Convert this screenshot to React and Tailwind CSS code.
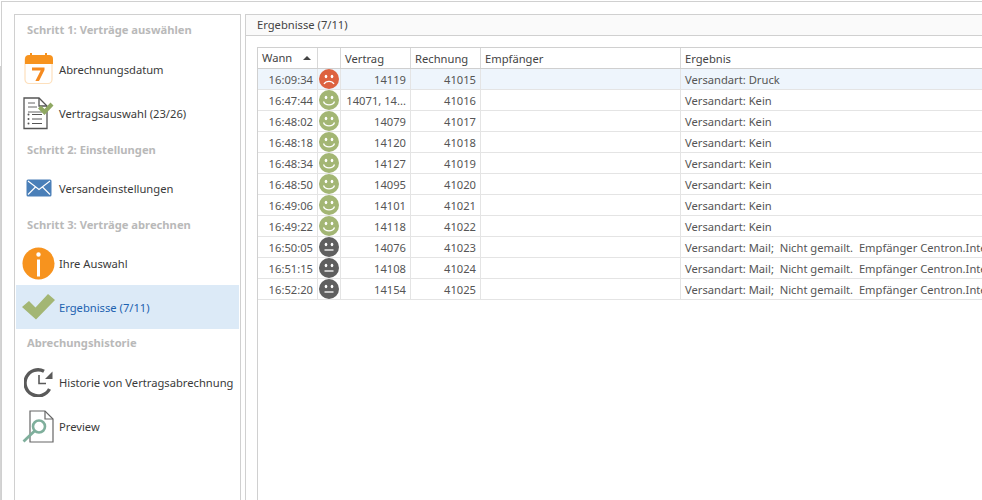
const font = { fontFamily: '"Noto Sans", sans-serif' };

const mailText = 'Versandart: Mail;  Nicht gemailt.  Empfänger Centron.Inte';

const rows = [
  ['16:09:34', 'sad', '14119', '41015', 'Versandart: Druck'],
  ['16:47:44', 'happy', '14071, 14...', '41016', 'Versandart: Kein'],
  ['16:48:02', 'happy', '14079', '41017', 'Versandart: Kein'],
  ['16:48:18', 'happy', '14120', '41018', 'Versandart: Kein'],
  ['16:48:34', 'happy', '14127', '41019', 'Versandart: Kein'],
  ['16:48:50', 'happy', '14095', '41020', 'Versandart: Kein'],
  ['16:49:06', 'happy', '14101', '41021', 'Versandart: Kein'],
  ['16:49:22', 'happy', '14118', '41022', 'Versandart: Kein'],
  ['16:50:05', 'neutral', '14076', '41023', mailText],
  ['16:51:15', 'neutral', '14108', '41024', mailText],
  ['16:52:20', 'neutral', '14154', '41025', mailText],
];

const Calendar = () => (
  <svg width="30" height="32" viewBox="0 0 30 32">
    <rect x="1" y="3" width="27" height="27.5" rx="4" fill="#fff" stroke="#fde0bd" strokeWidth="1.2" />
    <path d="M1 11V6a4 4 0 0 1 4-4h20a4 4 0 0 1 4 4v5z" fill="#f7931e" />
    <rect x="6" y="0" width="2" height="3" fill="#f7931e" />
    <rect x="21" y="0" width="2" height="3" fill="#f7931e" />
    <path d="M8 14.5h12.5v2.6L15 28h-3.6l5.3-10.5H8z" fill="#f58a1f" />
  </svg>
);

const ListCheck = () => (
  <svg width="32" height="33" viewBox="0 0 32 33">
    <path d="M1 1h15l8 8v22.5H1z" fill="#fff" stroke="#555" strokeWidth="1.3" />
    <path d="M16 1v8h8" fill="none" stroke="#555" strokeWidth="1.3" />
    <path d="M5 6h7M5 10h9M5 15h14" stroke="#666" strokeWidth="1" />
    <path d="M9 17.5h10M9 22h10M9 26.5h10" stroke="#555" strokeWidth="1" />
    <circle cx="5.5" cy="17.5" r="1" fill="#555" />
    <circle cx="5.5" cy="22" r="1" fill="#555" />
    <circle cx="5.5" cy="26.5" r="1" fill="#555" />
    <path d="M15 11.5l3-3 3.5 3.5 6-6.5 3 3-9 9.5z" fill="#8fa862" />
  </svg>
);

const Mail = () => (
  <svg width="26" height="18" viewBox="0 0 26 18">
    <rect width="25" height="17" x="0.5" y="0.5" rx="1.5" fill="#4a7fb8" />
    <path d="M2 2l11 8.5L24 2M2 15.5l7.5-7.5M24 15.5L16.500 8" fill="none" stroke="#fff" strokeWidth="1.1" />
  </svg>
);

const Info = () => (
  <svg width="33" height="33" viewBox="0 0 33 33">
    <circle cx="16.500" cy="16.500" r="16" fill="#f7931e" />
    <rect x="15" y="12.500" width="3" height="17" fill="#fff" />
    <circle cx="16.500" cy="7.500" r="2.200" fill="#fff" />
  </svg>
);

const Check = () => (
  <svg width="33" height="26" viewBox="0 0 33 26">
    <path d="M0 13l7-6 6.500 6.500L26 0l7 6-19 19.500z" fill="#a3b674" />
  </svg>
);

const History = () => (
  <svg width="30" height="30" viewBox="0 0 30 30">
    <path d="M25.500 22A13 13 0 1 1 20 4.300" fill="none" stroke="#5a5a5a" strokeWidth="3.400" />
    <path d="M15 8v8.500h7" fill="none" stroke="#5a5a5a" strokeWidth="1.600" />
    <path d="M21 12l7.500-7.500V12z" fill="#5a5a5a" />
  </svg>
);

const Preview = () => (
  <svg width="33" height="33" viewBox="0 0 33 33">
    <path d="M8 1h15l8 8v23H8z" fill="#fff" stroke="#666" strokeWidth="1.200" />
    <path d="M23 1v8h8" fill="none" stroke="#666" strokeWidth="1.200" />
    <circle cx="17" cy="16.500" r="6" fill="#fff" stroke="#7faf9c" strokeWidth="2.600" />
    <path d="M12.500 21L1.500 31.500" stroke="#7faf9c" strokeWidth="2.800" />
  </svg>
);

const Face = ({ mood }) => {
  const fill = mood === 'sad' ? 'fill-[#dd6240]' : mood === 'happy' ? 'fill-[#a3b674]' : 'fill-[#5f5f5f]';
  return (
    <svg width="20" height="20" viewBox="0 0 20 20">
      <circle cx="10" cy="10" r="10" className={fill} />
      <ellipse cx="7" cy="7.500" rx="1.300" ry="1.700" fill="#fff" />
      <ellipse cx="13" cy="7.500" rx="1.300" ry="1.700" fill="#fff" />
      {mood === 'sad' && <path d="M5 15c2-3.500 8-3.500 10 0" fill="none" stroke="#fff" strokeWidth="1.300" />}
      {mood === 'happy' && <path d="M4.500 11.500c1.500 4.500 9.500 4.500 11 0" fill="none" stroke="#fff" strokeWidth="1.300" />}
      {mood === 'neutral' && <path d="M5.500 13h9" stroke="#fff" strokeWidth="1.300" />}
    </svg>
  );
};

const Group = ({ className, children }) => (
  <div className={`pl-[12px] text-[11.2px] font-bold text-[#b9b9b9] leading-[16px] ${className}`}>{children}</div>
);

const Item = ({ icon, label, active }) => (
  <div className={`flex items-center h-[44px] mx-px ${active ? 'bg-[#dceaf7] text-[#1c62b0]' : 'text-[#3a3a3a]'}`}>
    <div className="w-[43px] flex justify-center shrink-0 pl-[2px]">{icon}</div>
    <span className="text-[11.2px] leading-[16px] pt-px whitespace-nowrap">{label}</span>
  </div>
);

const App = () => {
  return (
    <div className="flex h-[500px] w-[982px] overflow-hidden bg-white" style={font}>
      <div className="w-px shrink-0 mt-[66px] bg-[#d4d4d4]" />
      <div className="flex-1 mt-px border-t border-l border-[#d0d0d0] flex pt-[12px] pl-[12px] gap-[4px] min-w-0">
        <div className="w-[227px] shrink-0 border border-b-0 border-[#d0d0d0]">
          <Group className="mt-[7px] mb-[9px]">Schritt 1: Verträge auswählen</Group>
          <Item icon={<Calendar />} label="Abrechnungsdatum" />
          <Item icon={<ListCheck />} label="Vertragsauswahl (23/26)" />
          <Group className="mt-[7px] mb-[8px]">Schritt 2: Einstellungen</Group>
          <Item icon={<Mail />} label="Versandeinstellungen" />
          <Group className="mt-[7px] mb-[8px]">Schritt 3: Verträge abrechnen</Group>
          <Item icon={<Info />} label="Ihre Auswahl" />
          <Item icon={<Check />} label="Ergebnisse (7/11)" active />
          <Group className="mt-[6px] mb-[9px]">Abrechungshistorie</Group>
          <Item icon={<History />} label="Historie von Vertragsabrechnung" />
          <Item icon={<Preview />} label="Preview" />
        </div>

        <div className="flex-1 min-w-0 border-t border-l border-[#d0d0d0] overflow-hidden">
          <div className="h-[21px] bg-[#fafafa] border-b border-[#d0d0d0] pl-[11px] text-[11.2px] leading-[20px] text-[#444]">Ergebnisse (7/11)</div>
          <div className="mt-[11px] ml-[11px] w-[900px] h-[500px] border-l border-t border-[#d0d0d0] text-[11.2px] text-[#555]">
            <div className="flex h-[21px] border-b border-[#cfcfcf] leading-[22px] text-[#444]">
              <div className="w-[60px] pl-[4px] border-r border-[#d8d8d8] flex items-center justify-between pr-[3px]">
                <span>Wann</span>
                <svg width="8" height="4" viewBox="0 0 8 4" className="mr-[3px]"><path d="M0 4L4 0l4 4z" fill="#444" /></svg>
              </div>
              <div className="w-[23px] border-r border-[#d8d8d8]" />
              <div className="w-[70px] pl-[4px] border-r border-[#d8d8d8]">Vertrag</div>
              <div className="w-[70px] pl-[4px] border-r border-[#d8d8d8]">Rechnung</div>
              <div className="w-[200px] pl-[4px] border-r border-[#d8d8d8]">Empfänger</div>
              <div className="flex-1 pl-[4px]">Ergebnis</div>
            </div>
            {rows.map((r, i) => (
              <div key={r[0]} className={`flex h-[21px] border-b border-[#e4e4e4] leading-[22px] ${i === 0 ? 'bg-[#eef5fc]' : ''}`}>
                <div className="w-[60px] pr-[4px] text-right border-r border-[#e4e4e4]">{r[0]}</div>
                <div className="w-[23px] border-r border-[#e4e4e4] flex items-center justify-center"><Face mood={r[1]} /></div>
                <div className="w-[70px] pr-[4px] text-right border-r border-[#e4e4e4] whitespace-nowrap">{r[2]}</div>
                <div className="w-[70px] pr-[4px] text-right border-r border-[#e4e4e4]">{r[3]}</div>
                <div className="w-[200px] border-r border-[#e4e4e4]" />
                <div className="flex-1 pl-[4px] whitespace-pre">{r[4]}</div>
              </div>
            ))}
          </div>
        </div>
      </div>
    </div>
  );
};

export default App;
